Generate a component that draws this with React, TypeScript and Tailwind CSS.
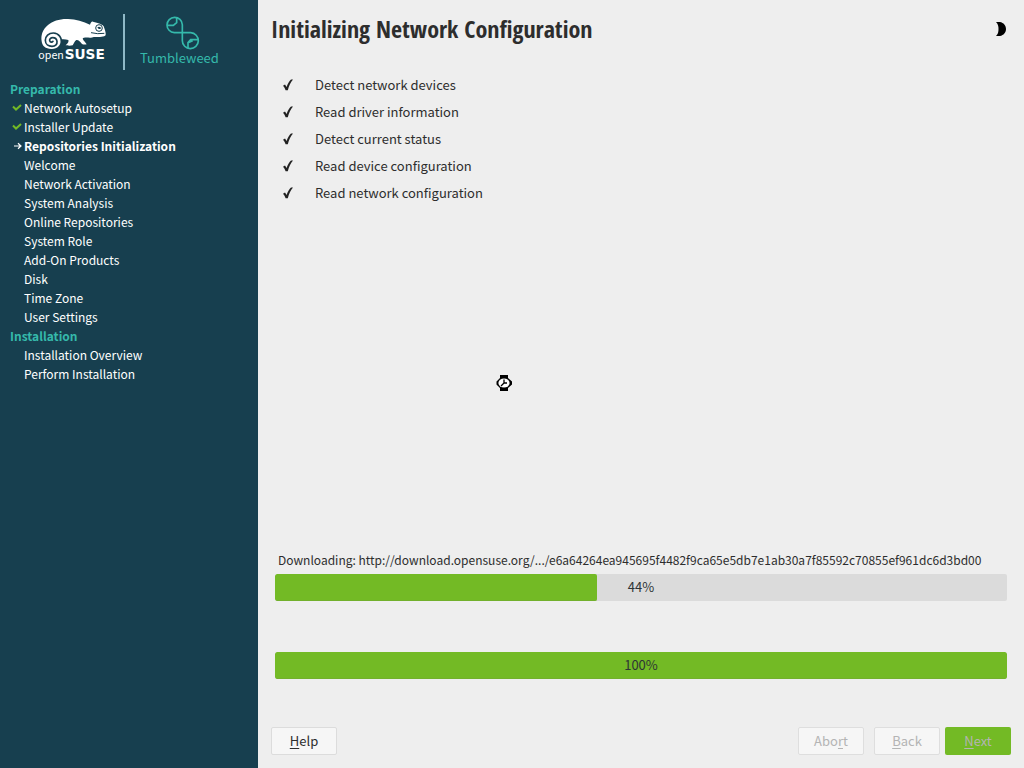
import React from 'react';

type StepState = 'done' | 'current' | 'pending';
type Step = { label: string; state: StepState };

const sections: { title: string; steps: Step[] }[] = [
  {
    title: 'Preparation',
    steps: [
      { label: 'Network Autosetup', state: 'done' },
      { label: 'Installer Update', state: 'done' },
      { label: 'Repositories Initialization', state: 'current' },
      { label: 'Welcome', state: 'pending' },
      { label: 'Network Activation', state: 'pending' },
      { label: 'System Analysis', state: 'pending' },
      { label: 'Online Repositories', state: 'pending' },
      { label: 'System Role', state: 'pending' },
      { label: 'Add-On Products', state: 'pending' },
      { label: 'Disk', state: 'pending' },
      { label: 'Time Zone', state: 'pending' },
      { label: 'User Settings', state: 'pending' },
    ],
  },
  {
    title: 'Installation',
    steps: [
      { label: 'Installation Overview', state: 'pending' },
      { label: 'Perform Installation', state: 'pending' },
    ],
  },
];

const tasks = [
  'Detect network devices',
  'Read driver information',
  'Detect current status',
  'Read device configuration',
  'Read network configuration',
];

function OpenSuseLogo() {
  return (
    <svg width="72" height="48" viewBox="24 36 216 144" aria-label="openSUSE" role="img">
      <path
        d="M35 112C32 94 38 76 54 63C68 51 90 44 114 45C138 45 160 53 180 62C182 57 184 52 189 53C204 57 219 61 221 67C224 75 228 86 227 93C224 99 208 99 194 99C190 99 187 102 180 101C168 100 160 100 158 104C161 111 168 116 170 121C163 123 159 121 156 120C151 113 145 107 139 108C134 111 131 120 128 124C121 126 111 125 107 124C114 118 117 112 115 108C108 105 99 105 92 106C94 124 82 135 66 135C48 136 36 126 35 112Z"
        fill="#fff"
      />
      <path
        d="M95 124C97 100 86 87 70 87C56 87 46 97 46 109C46 121 56 127 66 127C77 127 82 120 81 112C80 105 74 101 68 101C62 101 58 105 59 110C60 115 66 116 69 112"
        fill="none"
        stroke="#173f4f"
        strokeWidth="5"
        strokeLinecap="round"
      />
      <circle cx="207" cy="72" r="10" fill="#fff" stroke="#173f4f" strokeWidth="3" />
      <path d="M202 70Q207 66 212 70V75H206Z" fill="#173f4f" />
      <path d="M183 86Q203 91 223 88" fill="none" stroke="#173f4f" strokeWidth="3" />
      <text x="25" y="166" fontSize="32" fill="#fff" fontFamily="Noto Sans CJK SC, sans-serif">
        open
      </text>
      <text x="104" y="166" fontSize="41" fontWeight="700" fill="#fff" fontFamily="DejaVu Sans, sans-serif">
        SUSE
      </text>
    </svg>
  );
}

function TumbleweedMark() {
  return (
    <svg
      className="ml-1.5"
      width="36"
      height="36"
      viewBox="12 12 108 108"
      fill="none"
      stroke="#35b9ab"
      strokeWidth="5"
      aria-hidden="true"
    >
      <path d="M67 44A23 23 0 1 0 43 68H92A24 24 0 1 1 67 92Z" />
      <path d="M21 46H40L50 38V21" />
      <path d="M84 114V98L92 89H114M84 98L98 92" />
    </svg>
  );
}

function StepMark({ state }: { state: StepState }) {
  if (state === 'done') {
    return (
      <svg className="mt-1" width="12" height="10" viewBox="0 0 12 10" fill="none" stroke="#73ba25" strokeWidth="2" aria-label="done">
        <path d="M1 4.5L4 7.5L9 3" />
      </svg>
    );
  }
  if (state === 'current') {
    return (
      <svg className="mt-[5px] ml-0.5" width="8" height="10" viewBox="0 0 8 10" fill="none" stroke="#fff" strokeWidth="1.2" aria-label="current">
        <path d="M0 5H6.5M4 2.2L7 5L4 7.8" />
      </svg>
    );
  }
  return null;
}

function ProgressBar({ value, label }: { value: number; label: string }) {
  return (
    <div
      role="progressbar"
      aria-label={label}
      aria-valuenow={value}
      aria-valuemin={0}
      aria-valuemax={100}
      className="grid h-[27px] overflow-hidden rounded-xs bg-[#dbdbdb]"
    >
      <div
        className="col-start-1 row-start-1 rounded-xs border-b border-[#72b02c] bg-[#73ba25]"
        style={{ width: `${value}%` }}
      />
      <span className="col-start-1 row-start-1 self-center pb-0.5 text-center text-[#2e3436]">{value}%</span>
    </div>
  );
}

function Mnemonic({ text, at }: { text: string; at: number }) {
  return (
    <span>
      {text.slice(0, at)}
      <span className="underline underline-offset-2">{text[at]}</span>
      {text.slice(at + 1)}
    </span>
  );
}

export default function App() {
  return (
    <div className="relative flex min-h-screen bg-[#eeeeee] font-['Noto_Sans_CJK_SC','Noto_Sans',sans-serif] text-[13px] leading-[19px] text-[#2d2d2d]">
      <aside className="w-[258px] shrink-0 bg-[#173f4f] text-xs leading-[19px] text-white">
        <header className="flex h-[79px] items-start pt-3.5 pl-[38px]">
          <div className="pt-0.5">
            <OpenSuseLogo />
          </div>
          <div className="ml-[13px] h-14 w-0.5 bg-[#8fb8c6]" />
          <div className="ml-[15px] flex flex-col items-center text-[#35b9ab]">
            <TumbleweedMark />
            <span className="-mt-0.5 text-[13px] leading-5">Tumbleweed</span>
          </div>
        </header>
        <nav aria-label="Installation steps">
          {sections.map((section) => (
            <section key={section.title}>
              <h2 className="pl-2.5 font-bold text-[#35b9ab]">{section.title}</h2>
              <ol>
                {section.steps.map((step) => (
                  <li key={step.label} className="flex">
                    <span className="w-6 shrink-0 pl-3">
                      <StepMark state={step.state} />
                    </span>
                    <span className={step.state === 'current' ? 'font-bold' : ''}>{step.label}</span>
                  </li>
                ))}
              </ol>
            </section>
          ))}
        </nav>
      </aside>

      <main className="flex min-w-0 flex-1 flex-col px-[13px] pb-[13px]">
        <div className="flex items-center justify-between pt-[11px]">
          <h1 className="font-['Open_Sans_Condensed','Noto_Sans_Condensed','Roboto_Condensed','Liberation_Sans_Narrow',sans-serif] text-2xl leading-9 font-bold">
            Initializing Network Configuration
          </h1>
          <button type="button" aria-label="Toggle dark theme" className="p-1">
            <svg width="13" height="14" viewBox="0 0 13 14" fill="#000">
              <path d="M2 0C8-1 12 2.5 12 7S8 15 2 14C4 12 4.5 10 4.5 7S4 2 2 0Z" />
            </svg>
          </button>
        </div>

        <ul className="mt-6">
          {tasks.map((task) => (
            <li key={task} className="flex h-[27px] items-center">
              <svg className="ml-3 shrink-0" width="10" height="12" viewBox="0 0 10 12" fill="#222" aria-label="done">
                <path d="M0 6.8L2 5.4L3.6 8C4.8 4.8 6.4 2 8 0.6H10C7.6 3.5 6 7 4.8 11.2H2.6C2 9.6 1.2 7.8 0 6.8Z" />
              </svg>
              <span className="ml-[22px]">{task}</span>
            </li>
          ))}
        </ul>

        <div className="mt-auto pr-1 pl-1">
          <p className="mb-[5px] overflow-hidden pl-[3px] text-xs leading-[19px] whitespace-nowrap">
            Downloading: http://download.opensuse.org/.../e6a64264ea945695f4482f9ca65e5db7e1ab30a7f85592c70855ef961dc6d3bd00
          </p>
          <ProgressBar value={44} label="Download progress" />
          <div className="mt-[51px]">
            <ProgressBar value={100} label="Overall progress" />
          </div>
        </div>

        <footer className="mt-12 flex items-center">
          <button type="button" className="h-7 w-[66px] rounded-xs border border-[#dcdcdc] bg-[#f6f6f6] pb-0.5">
            <Mnemonic text="Help" at={0} />
          </button>
          <button type="button" disabled className="ml-auto h-7 w-[66px] rounded-xs border border-[#dedede] bg-[#f6f6f6] pb-0.5 text-[#b4b4b4]">
            <Mnemonic text="Abort" at={3} />
          </button>
          <button type="button" disabled className="ml-2.5 h-7 w-[66px] rounded-xs border border-[#dedede] bg-[#f6f6f6] pb-0.5 text-[#b4b4b4]">
            <Mnemonic text="Back" at={0} />
          </button>
          <button type="button" disabled className="ml-[5px] h-7 w-[66px] rounded-xs bg-[#73ba25] pb-0.5 text-[#b4b4b4]">
            <Mnemonic text="Next" at={0} />
          </button>
        </footer>
      </main>

      <svg className="absolute top-[374px] left-[496px]" width="18" height="18" viewBox="0 0 18 18" aria-label="Busy">
        <path d="M4 1H12V4L16 7.5V10.5L12 14V17H4V14L0.5 10.5V7.5L4 4Z" fill="#000" />
        <ellipse cx="8" cy="9" rx="5.6" ry="4.6" fill="#fff" />
        <path d="M8 5.5V9H11M8 9L5 12" fill="none" stroke="#000" strokeWidth="1.3" />
      </svg>
    </div>
  );
}
